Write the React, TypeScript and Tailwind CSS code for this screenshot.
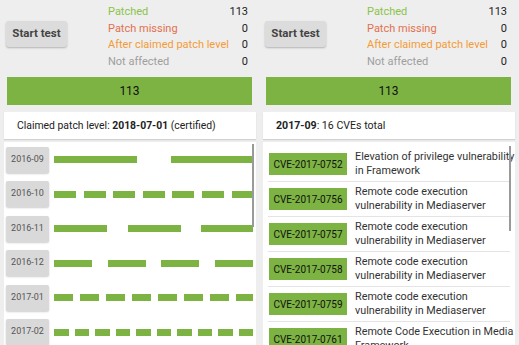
import React from "react";

const stats = [
  { label: "Patched", value: "113", color: "text-[#8bc34a]" },
  { label: "Patch missing", value: "0", color: "text-[#e2704f]" },
  { label: "After claimed patch level", value: "0", color: "text-[#f39b37]" },
  { label: "Not affected", value: "0", color: "text-[#9e9e9e]" },
];

// each month: how many CVEs, dash width and the gap between dashes
const months = [
  { date: "2016-09", n: 3, w: 83, gap: 34 },
  { date: "2016-10", n: 7, w: 22, gap: 7.6 },
  { date: "2016-11", n: 3, w: 53, gap: 20.5 },
  { date: "2016-12", n: 4, w: 38, gap: 15.7 },
  { date: "2017-01", n: 8, w: 18.5, gap: 7.5 },
  { date: "2017-02", n: 10, w: 14.5, gap: 6 },
];

const cves = [
  { id: "CVE-2017-0752", lines: ["Elevation of privilege vulnerability", "in Framework"] },
  { id: "CVE-2017-0756", lines: ["Remote code execution", "vulnerability in Mediaserver"] },
  { id: "CVE-2017-0757", lines: ["Remote code execution", "vulnerability in Mediaserver"] },
  { id: "CVE-2017-0758", lines: ["Remote code execution", "vulnerability in Mediaserver"] },
  { id: "CVE-2017-0759", lines: ["Remote code execution", "vulnerability in Mediaserver"] },
  { id: "CVE-2017-0761", lines: ["Remote Code Execution in Media", "Framework"] },
];

function Header() {
  return (
    <>
      <div className="flex items-start pt-[4px]">
        <button className="ml-[2px] mt-[17px] w-[61px] h-[26px] shrink-0 rounded-[3px] bg-[#dcdcdc] shadow-[0_1px_2px_rgba(0,0,0,0.25)] text-[11.5px] font-bold text-[#444]">
          Start test
        </button>
        <div className="ml-[41px] mr-[8px] flex-1">
          {stats.map((s) => (
            <div key={s.label} className="flex h-[16.6px] items-center justify-between text-[11px]">
              <span className={s.color}>{s.label}</span>
              <span className="text-[#222]">{s.value}</span>
            </div>
          ))}
        </div>
      </div>
      <div className="mt-[7px] ml-[3px] mr-[4px] h-[28px] bg-[#7cb342] flex items-center justify-center text-[12px] text-[#111]">
        113
      </div>
    </>
  );
}

function PatchPanel() {
  return (
    <div className="flex-1 flex flex-col min-w-0">
      <Header />
      <div className="mt-[7px] h-[27px] bg-white shadow-[0_1px_1px_rgba(0,0,0,0.12)] flex items-center pl-[13px] text-[10.4px] text-[#222]">
        <span>
          Claimed patch level: <b>2018-07-01</b> (certified)
        </span>
      </div>
      <div className="relative mt-[3px] flex-1 bg-white overflow-hidden">
        {months.map((m) => (
          <div key={m.date} className="flex h-[34.5px] items-center">
            <div className="ml-[2px] w-[43px] h-[26px] shrink-0 rounded-[2px] bg-[#d9d9d9] shadow-[0_1px_2px_rgba(0,0,0,0.2)] flex items-center justify-center text-[9px] text-[#555]">
              {m.date}
            </div>
            <div className="ml-[5px] w-[199px] flex overflow-hidden">
              {Array.from({ length: m.n }).map((_, i) => (
                <div
                  key={i}
                  className="h-[7px] shrink-0 bg-[#7cb342]"
                  style={{ width: m.w, marginRight: m.gap }}
                />
              ))}
            </div>
          </div>
        ))}
        <div className="absolute right-[2px] top-[2px] w-[2px] h-[83px] bg-[#9a9a9a]" />
      </div>
    </div>
  );
}

function CvePanel() {
  return (
    <div className="flex-1 flex flex-col min-w-0">
      <Header />
      <div className="mt-[7px] h-[27px] bg-white shadow-[0_1px_1px_rgba(0,0,0,0.12)] flex items-center pl-[13px] text-[10.6px] text-[#222]">
        <span>
          <b>2017-09</b>: 16 CVEs total
        </span>
      </div>
      <div className="relative mt-[3px] flex-1 bg-white overflow-hidden pt-[5px]">
        {cves.map((c) => (
          <div key={c.id} className="mx-[5px] flex h-[35px] items-center border-b border-[#e4e4e4]">
            <div className="ml-[1px] w-[78px] h-[22px] shrink-0 bg-[#7cb342] flex items-center justify-center text-[10px] text-[#111]">
              {c.id}
            </div>
            <div className="ml-[8px] whitespace-nowrap text-[10.8px] leading-[14px] text-[#333]">
              {c.lines.map((l) => (
                <div key={l}>{l}</div>
              ))}
            </div>
          </div>
        ))}
        <div className="absolute right-[4px] top-[4px] w-[2px] h-[85px] bg-[#9a9a9a]" />
      </div>
    </div>
  );
}

export default function App() {
  return (
    <div
      className="w-[519px] h-[345px] bg-[#eeeeee] flex gap-[7px] px-[4px] overflow-hidden"
      style={{ fontFamily: "Roboto, 'Noto Sans', sans-serif" }}
    >
      <PatchPanel />
      <CvePanel />
    </div>
  );
}
